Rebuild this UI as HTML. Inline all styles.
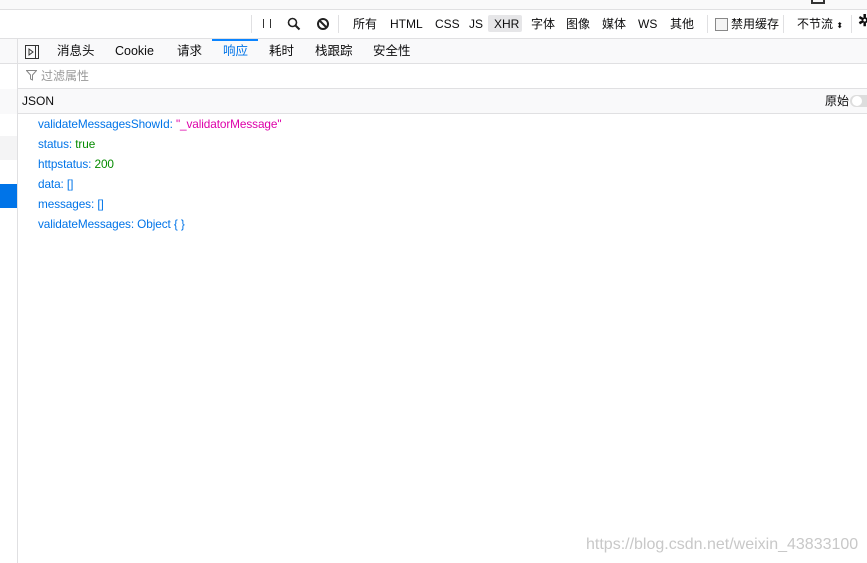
<!DOCTYPE html><html><head><style>
*{margin:0;padding:0;box-sizing:border-box}
body{width:867px;height:563px;overflow:hidden;background:#fff;font-family:"Liberation Sans","Noto Sans CJK SC",sans-serif;font-size:12px;line-height:16px;color:#0c0c0d;position:relative}
.a{position:absolute;line-height:16px}
.t{position:absolute;top:16px;font-size:12px;line-height:16px}
.tab{position:absolute;top:43px;font-size:12.5px;line-height:16px}
.j{position:absolute;left:38px;font-size:11.8px;letter-spacing:-0.1px;color:#0074e8;line-height:16px}
</style></head><body>
<div class="a" style="left:0;top:0;width:867px;height:10px;background:#f9f9fa;border-bottom:1px solid #e0e0e2"></div>
<div class="a" style="left:811px;top:0;width:14px;height:4px;border:2px solid #333;border-top:none"></div>
<div class="a" style="left:0;top:38px;width:867px;height:1px;background:#e0e0e2"></div>
<div class="a" style="left:251px;top:15px;width:1px;height:18px;background:#e0e0e2"></div>
<div class="a" style="left:263px;top:19px;width:1px;height:9px;background:#333"></div>
<div class="a" style="left:270px;top:19px;width:1px;height:9px;background:#333"></div>
<svg class="a" style="left:287px;top:17px" width="14" height="14"><circle cx="5.5" cy="5.5" r="4" fill="none" stroke="#222" stroke-width="1.6"/><path d="M8.5 8.5L12.5 12.5" stroke="#222" stroke-width="2"/></svg>
<svg class="a" style="left:316px;top:17px" width="14" height="14"><circle cx="7" cy="7" r="5" fill="none" stroke="#222" stroke-width="2"/><path d="M3.5 3.5L10.5 10.5" stroke="#222" stroke-width="2"/></svg>
<div class="a" style="left:338px;top:15px;width:1px;height:18px;background:#e0e0e2"></div>
<div class="t" style="left:353px">所有</div>
<div class="t" style="left:390px">HTML</div>
<div class="t" style="left:435px">CSS</div>
<div class="t" style="left:469px">JS</div>
<div class="a" style="left:488px;top:15px;width:34px;height:17px;background:#e6e6e8;border-radius:2px"></div>
<div class="t" style="left:494px">XHR</div>
<div class="t" style="left:531px">字体</div>
<div class="t" style="left:566px">图像</div>
<div class="t" style="left:602px">媒体</div>
<div class="t" style="left:638px">WS</div>
<div class="t" style="left:670px">其他</div>
<div class="a" style="left:707px;top:15px;width:1px;height:18px;background:#e0e0e2"></div>
<div class="a" style="left:715px;top:18px;width:13px;height:13px;border:1px solid #888;background:#f4f4f4"></div>
<div class="t" style="left:731px">禁用缓存</div>
<div class="a" style="left:783px;top:15px;width:1px;height:18px;background:#e0e0e2"></div>
<div class="t" style="left:797px">不节流 <span style="font-size:8px">⬍</span></div>
<div class="a" style="left:851px;top:15px;width:1px;height:18px;background:#e0e0e2"></div>
<div class="t" style="left:858px;top:14px;font-size:16px;font-weight:bold">✲</div>
<div class="a" style="left:18px;top:39px;width:849px;height:25px;background:#f9f9fa;border-bottom:1px solid #e0e0e2"></div>
<div class="a" style="left:0;top:39px;width:18px;height:524px;background:#fff;border-right:1px solid #e0e0e2"></div>
<div class="a" style="left:0;top:39px;width:17px;height:25px;background:#f9f9fa;border-bottom:1px solid #e0e0e2"></div>
<div class="a" style="left:0;top:89px;width:17px;height:25px;background:#f9f9fa"></div>
<div class="a" style="left:0;top:136px;width:17px;height:24px;background:#f4f4f5"></div>
<div class="a" style="left:0;top:184px;width:17px;height:24px;background:#0074e8"></div>
<svg class="a" style="left:25px;top:45px" width="14" height="14"><rect x="0.5" y="0.5" width="13" height="13" fill="none" stroke="#333"/><path d="M10.5 1v12" stroke="#333"/><path d="M4 4l4 3-4 3z" fill="none" stroke="#333"/></svg>
<div class="tab" style="left:57px">消息头</div>
<div class="tab" style="left:115px">Cookie</div>
<div class="tab" style="left:177px">请求</div>
<div class="a" style="left:212px;top:39px;width:46px;height:2px;background:#0a84ff"></div>
<div class="tab" style="left:223px;color:#0074e8">响应</div>
<div class="tab" style="left:269px">耗时</div>
<div class="tab" style="left:315px">栈跟踪</div>
<div class="tab" style="left:373px">安全性</div>
<svg class="a" style="left:26px;top:70px" width="11" height="11"><path d="M0.5 0.5h10L6.5 5v5l-2-1V5z" fill="none" stroke="#888"/></svg>
<div class="a" style="left:41px;top:68px;color:#999;font-size:12px">过滤属性</div>
<div class="a" style="left:18px;top:88px;width:849px;height:26px;background:#f9f9fa;border-top:1px solid #e0e0e2;border-bottom:1px solid #e0e0e2"></div>
<div class="a" style="left:22px;top:93px;font-size:12px">JSON</div>
<div class="a" style="left:825px;top:93px;font-size:12px">原始</div>
<div class="a" style="left:850px;top:95px;width:24px;height:12px;border-radius:6px;background:#ddd"></div>
<div class="a" style="left:852px;top:96px;width:10px;height:10px;border-radius:5px;background:#fff"></div>
<div class="j" style="top:116px">validateMessagesShowId: <span style="color:#dd00a9">"_validatorMessage"</span></div>
<div class="j" style="top:136px">status: <span style="color:#058b00">true</span></div>
<div class="j" style="top:156px">httpstatus: <span style="color:#058b00">200</span></div>
<div class="j" style="top:176px">data: []</div>
<div class="j" style="top:196px">messages: []</div>
<div class="j" style="top:216px">validateMessages: Object { }</div>
<div class="a" style="left:586px;top:536px;font-size:16px;line-height:18px;color:#c8c8c8">https://blog.csdn.net/weixin_43833100</div>
</body></html>
